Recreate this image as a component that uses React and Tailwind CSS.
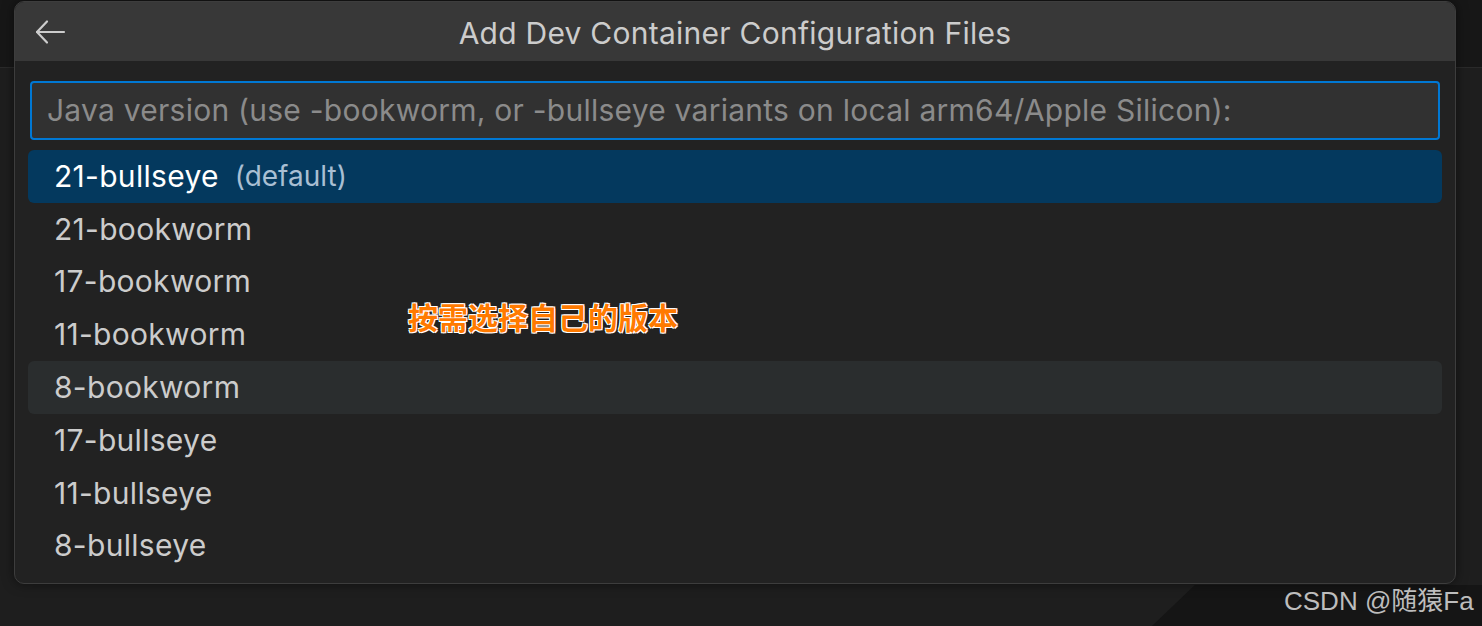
import { useState } from 'react';

const items = [
  { label: '21-bullseye', note: '(default)' },
  { label: '21-bookworm' },
  { label: '17-bookworm' },
  { label: '11-bookworm' },
  { label: '8-bookworm' },
  { label: '17-bullseye' },
  { label: '11-bullseye' },
  { label: '8-bullseye' },
];

function BackArrow() {
  return (
    <svg width="32" height="26" viewBox="0 0 32 26" fill="none" stroke="#cccccc" strokeWidth="2.2" strokeLinecap="round" strokeLinejoin="round">
      <path d="M3 13h27" />
      <path d="M13 2.5 3 13l10 10.5" />
    </svg>
  );
}

export default function App() {
  const [selected] = useState(0);
  const hovered = 4;

  return (
    <div className="relative h-[626px] w-[1482px] overflow-hidden bg-[#1e1e1e] font-['Inter','Liberation_Sans',sans-serif]">
      {/* editor chrome behind the picker */}
      <div className="h-[68px] border-b border-[#2a2a2a] bg-[#171717]" />
      <div className="absolute bottom-0 right-0 h-[41px] w-[330px] bg-[#151515] [clip-path:polygon(13%_0,100%_0,100%_100%,0_100%)]" />

      <div className="absolute left-[14px] top-[1px] w-[1442px] overflow-hidden rounded-[10px] border border-[#3d3d3d] bg-[#222222] shadow-[0_0_12px_rgba(0,0,0,0.5)]">
        <div className="relative flex h-[59px] items-center justify-center bg-[#383838] pt-[3px]">
          <button className="absolute left-[19px] top-[17px] flex items-center">
            <BackArrow />
          </button>
          <span className="text-[30px] tracking-[0.25px] text-[#cccccc]">Add Dev Container Configuration Files</span>
        </div>

        <div className="px-[15px] pt-[20px]">
          <div className="flex h-[59px] items-center rounded-[4px] border-2 border-[#0078d4] bg-[#313131] px-[15px]">
            <span className="whitespace-nowrap text-[30px] tracking-[0.25px] text-[#8b8b8b]">
              Java version (use -bookworm, or -bullseye variants on local arm64/Apple Silicon):
            </span>
          </div>
        </div>

        <ul className="px-[13px] pb-[11px] pt-[10px]">
          {items.map((it, i) => (
            <li
              key={it.label}
              className={
                'flex h-[52.8px] items-center rounded-[6px] px-[26px] ' +
                (i === selected ? 'bg-[#04395e]' : i === hovered ? 'bg-[#2a2d2e]' : '')
              }
            >
              <span className={'text-[30px] tracking-[0.3px] ' + (i === selected ? 'text-white' : 'text-[#cccccc]')}>{it.label}</span>
              {it.note && <span className="ml-[16px] text-[28px] text-[#a9bfd3]">{it.note}</span>}
            </li>
          ))}
        </ul>
      </div>

      <div className="absolute left-[408px] top-[294px] text-[30px] font-bold text-[#ff7a00] [text-shadow:-1px_-1px_0_#fff,1px_-1px_0_#fff,-1px_1px_0_#fff,1px_1px_0_#fff] font-['Noto_Sans_CJK_SC',sans-serif]">
        按需选择自己的版本
      </div>

      <div className="absolute left-[1284px] top-[582px] whitespace-nowrap text-[26px] text-[#bdbdbd] font-['Liberation_Sans','Noto_Sans_CJK_SC',sans-serif]">
        CSDN @随猿Fa
      </div>
    </div>
  );
}
